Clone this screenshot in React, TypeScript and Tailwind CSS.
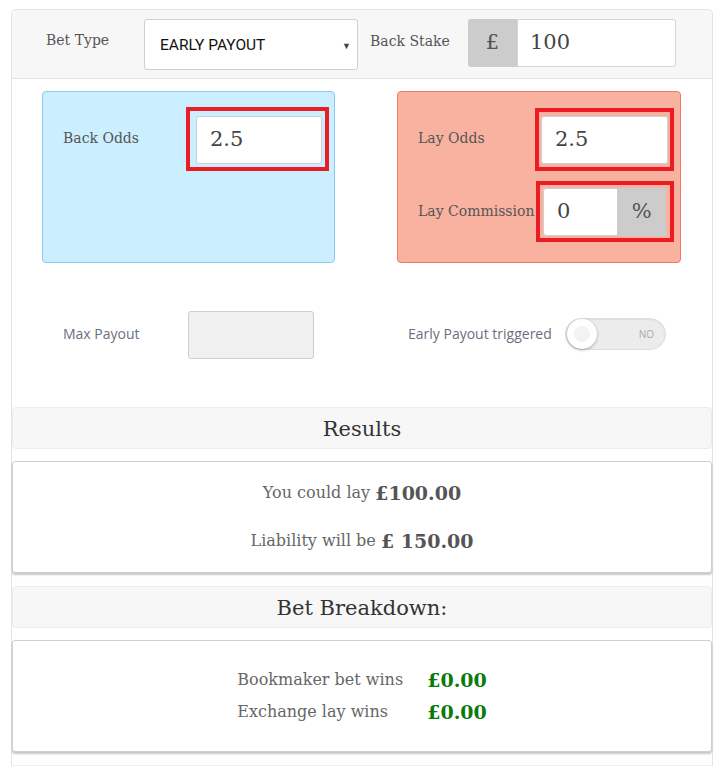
import React from 'react';

const serif = { fontFamily: '"DejaVu Serif", "Liberation Serif", serif' };
const sans = { fontFamily: '"Open Sans", "Liberation Sans", sans-serif' };

const ValueInput: React.FC<{ value: string; className?: string }> = ({ value, className = '' }) => (
    <div
        style={serif}
        className={`h-[48px] bg-white border border-[#cfcfcf] rounded-[3px] flex items-center pl-[13px] text-[21px] text-[#444] ${className}`}
    >
        {value}
    </div>
);

const Toggle: React.FC = () => (
    <div className="relative w-[101px] h-[32px] rounded-full bg-[#ececec] border border-[#dedede] shadow-[inset_0_1px_2px_rgba(0,0,0,0.06)]">
        <div className="absolute left-[1px] top-[0px] w-[30px] h-[30px] rounded-full bg-white shadow-[0_1px_3px_rgba(0,0,0,0.3)] flex items-center justify-center">
            <div className="w-[16px] h-[16px] rounded-full bg-[#f3f3f3]" />
        </div>
        <span style={sans} className="absolute right-[11px] top-[8px] text-[10px] leading-[14px] text-[#aaa]">NO</span>
    </div>
);

const SectionTitle: React.FC<{ title: string; className?: string }> = ({ title, className = '' }) => (
    <div
        style={serif}
        className={`h-[42px] bg-[#f7f7f7] border border-[#ececec] rounded-[4px] flex items-center justify-center pt-[3px] text-[21px] text-[#333] ${className}`}
    >
        {title}
    </div>
);

const Card: React.FC<{ children: React.ReactNode; className?: string }> = ({ children, className = '' }) => (
    <div className={`h-[112px] bg-white border border-[#cfcfcf] rounded-[3px] shadow-[0_2px_2px_rgba(0,0,0,0.22)] ${className}`}>
        {children}
    </div>
);

const App: React.FC = () => {
    const breakdown = [
        { label: 'Bookmaker bet wins', value: '£0.00' },
        { label: 'Exchange lay wins', value: '£0.00' },
    ];

    return (
        <div className="w-[724px] h-[774px] bg-white overflow-hidden pt-[9px] pl-[11px]">
            <div className="w-[702px] h-[757px] border border-[#e4e4e4] border-b-[#f0f0f0] rounded-t-[5px] flex flex-col">
                {/* Top bar */}
                <div className="h-[69px] bg-[#f7f7f7] border-b border-[#e4e4e4] rounded-t-[5px] flex items-center">
                    <span style={serif} className="ml-[34px] w-[98px] -mt-[7px] text-[14px] text-[#555]">Bet Type</span>
                    <div className="relative w-[214px] h-[51px] bg-white border border-[#cfcfcf] rounded-[3px] flex items-center pl-[15px] pt-[3px]">
                        <span style={{ fontFamily: 'Roboto, "Liberation Sans", sans-serif' }} className="text-[15.5px] text-[#111]">EARLY PAYOUT</span>
                        <span className="absolute right-[6px] top-[19px] text-[9px] text-[#444]">▼</span>
                    </div>
                    <span style={serif} className="ml-[12px] w-[98px] -mt-[6px] text-[14px] text-[#555]">Back Stake</span>
                    <div className="flex h-[48px] -mt-[3px]">
                        <div style={serif} className="w-[49px] bg-[#cccccc] rounded-l-[3px] flex items-center justify-center text-[21px] text-[#555]">£</div>
                        <div style={serif} className="w-[159px] bg-white border border-[#d5d5d5] rounded-r-[3px] flex items-center pl-[12px] text-[21px] text-[#444]">100</div>
                    </div>
                </div>

                {/* Odds boxes */}
                <div className="flex mt-[12px]">
                    <div className="ml-[30px] w-[293px] h-[172px] bg-[#ccefff] border border-[#8cc8f2] rounded-[4px] pt-[15px] pl-[20px]">
                        <div className="flex items-center">
                            <span style={serif} className="w-[123px] -mt-[2px] text-[14px] text-[#555]">Back Odds</span>
                            <div className="w-[143px] border-4 border-[#ea1c24] pt-[5px] pr-[3px] pb-[3px] pl-[6px]">
                                <ValueInput value="2.5" />
                            </div>
                        </div>
                    </div>
                    <div className="ml-[62px] w-[284px] h-[172px] bg-[#f9b2a0] border border-[#f07a6a] rounded-[4px] pt-[16px] pl-[20px] flex flex-col gap-[10px]">
                        <div className="flex items-center">
                            <span style={serif} className="w-[117px] -mt-[2px] text-[14px] text-[#555]">Lay Odds</span>
                            <div className="w-[139px] border-4 border-[#ea1c24] pt-[4px] px-[2px] pb-[3px]">
                                <ValueInput value="2.5" />
                            </div>
                        </div>
                        <div className="flex items-center">
                            <span style={serif} className="w-[118px] text-[14px] text-[#555] whitespace-nowrap">Lay Commission</span>
                            <div className="w-[138px] border-4 border-[#ea1c24] pt-[3px] pl-[3px] pr-[4px] pb-[2px] flex">
                                <ValueInput value="0" className="w-[76px] rounded-r-none border-r-0" />
                                <div style={serif} className="w-[50px] h-[48px] bg-[#cccccc] flex items-center justify-center text-[21px] text-[#555]">%</div>
                            </div>
                        </div>
                    </div>
                </div>

                {/* Max payout row */}
                <div className="flex items-center mt-[48px]">
                    <span style={sans} className="ml-[51px] w-[125px] -mt-[4px] text-[14px] text-[#6b6f80]">Max Payout</span>
                    <div className="w-[126px] h-[48px] bg-[#f0f0f0] border border-[#cfcfcf] rounded-[3px]" />
                    <span style={sans} className="ml-[94px] w-[157px] -mt-[4px] text-[14px] text-[#6b6f80]">Early Payout triggered</span>
                    <div className="-mt-[2px]">
                        <Toggle />
                    </div>
                </div>

                {/* Results */}
                <SectionTitle title="Results" className="mt-[48px]" />
                <Card className="mt-[12px]">
                    <div style={serif} className="h-full flex flex-col items-center justify-center gap-[22px] text-[16px] text-[#666]">
                        <div className="h-[26px] flex items-center">
                            You could lay&nbsp;<span className="font-bold text-[19px] text-[#555]">£100.00</span>
                        </div>
                        <div className="h-[26px] flex items-center">
                            Liability will be&nbsp;<span className="font-bold text-[19px] text-[#555]">£ 150.00</span>
                        </div>
                    </div>
                </Card>

                {/* Bet breakdown */}
                <SectionTitle title="Bet Breakdown:" className="mt-[13px]" />
                <Card className="mt-[12px]">
                    <div style={serif} className="h-full flex items-center justify-center">
                        <div className="grid grid-cols-[190px_auto] gap-y-[6px] items-center">
                            {breakdown.map(row => (
                                <React.Fragment key={row.label}>
                                    <span className="text-[16px] text-[#666] h-[26px] flex items-center">{row.label}</span>
                                    <span className="text-[19px] font-bold text-[#0a7a0a] h-[26px] flex items-center">{row.value}</span>
                                </React.Fragment>
                            ))}
                        </div>
                    </div>
                </Card>
            </div>
        </div>
    );
};

export default App;
